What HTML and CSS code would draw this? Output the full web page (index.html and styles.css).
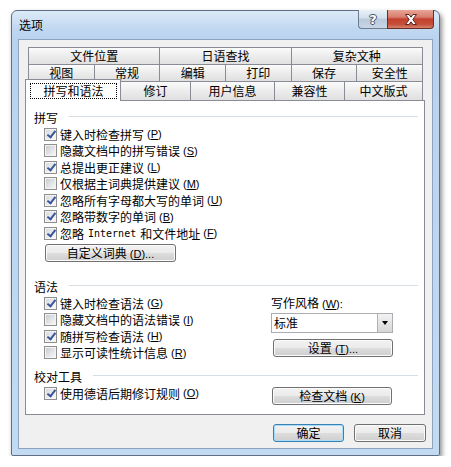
FILE: index.html
```html
<!DOCTYPE html>
<html lang="zh-CN">
  <head>
    <meta charset="UTF-8" />
    <title>选项</title>
    <link rel="stylesheet" href="styles.css">
  </head>
  <body>
    <div class="window">
      <div class="titlebar">
        <span class="title">选项</span>
        <div class="caption">
          <span class="cap-btn help">?</span>
          <span class="cap-btn close">
            <svg width="14" height="11" viewBox="0 0 14 11">
              <path d="M1.5 0.5 H5 L7 3.2 L9 0.5 H12.5 L8.8 5.5 L12.5 10.5 H9 L7 7.8 L5 10.5 H1.5 L5.2 5.5 Z" fill="#fff" stroke="#5b2620" stroke-width="1" stroke-linejoin="round" />
            </svg>
          </span>
        </div>
      </div>
      <div class="client">
        <div class="tabs">
          <div class="tab-row">
            <div class="tab">文件位置</div>
            <div class="tab">日语查找</div>
            <div class="tab">复杂文种</div>
          </div>
          <div class="tab-row">
            <div class="tab">视图</div>
            <div class="tab">常规</div>
            <div class="tab">编辑</div>
            <div class="tab">打印</div>
            <div class="tab">保存</div>
            <div class="tab">安全性</div>
          </div>
          <div class="tab-row front">
            <div class="tab active"><span class="focus">拼写和语法</span></div>
            <div class="tab w70">修订</div>
            <div class="tab w84">用户信息</div>
            <div class="tab w70">兼容性</div>
            <div class="tab grow">中文版式</div>
          </div>
        </div>

        <div class="panel">
          <div class="group-title">拼写</div>
          <div class="check on"><span class="box"></span>键入时检查拼写<span class="key">(<u>P</u>)</span></div>
          <div class="check"><span class="box"></span>隐藏文档中的拼写错误<span class="key">(<u>S</u>)</span></div>
          <div class="check on"><span class="box"></span>总提出更正建议<span class="key">(<u>L</u>)</span></div>
          <div class="check"><span class="box"></span>仅根据主词典提供建议<span class="key">(<u>M</u>)</span></div>
          <div class="check on"><span class="box"></span>忽略所有字母都大写的单词<span class="key">(<u>U</u>)</span></div>
          <div class="check on"><span class="box"></span>忽略带数字的单词<span class="key">(<u>B</u>)</span></div>
          <div class="check on"><span class="box"></span>忽略 <span class="mono">Internet</span> 和文件地址<span class="key">(<u>F</u>)</span></div>
          <button class="btn dict">自定义词典<span class="key">(<u>D</u>)...</span></button>

          <div class="group-title gap-lg">语法</div>
          <div class="grammar">
            <div class="col">
              <div class="check on"><span class="box"></span>键入时检查语法<span class="key">(<u>G</u>)</span></div>
              <div class="check"><span class="box"></span>隐藏文档中的语法错误<span class="key">(<u>I</u>)</span></div>
              <div class="check on"><span class="box"></span>随拼写检查语法<span class="key">(<u>H</u>)</span></div>
              <div class="check"><span class="box"></span>显示可读性统计信息<span class="key">(<u>R</u>)</span></div>
            </div>
            <div class="side">
              <div class="label">写作风格<span class="key">(<u>W</u>):</span></div>
              <div class="select">
                <span class="value">标准</span>
                <span class="drop"></span>
              </div>
              <button class="btn wide">设置<span class="key">(<u>T</u>)...</span></button>
            </div>
          </div>

          <div class="group-title gap-sm">校对工具</div>
          <div class="proof">
            <div class="check on"><span class="box"></span>使用德语后期修订规则<span class="key">(<u>O</u>)</span></div>
            <button class="btn wide doc">检查文档<span class="key">(<u>K</u>)</span></button>
          </div>
        </div>

        <div class="footer">
          <button class="btn default">确定</button>
          <button class="btn">取消</button>
        </div>
      </div>
    </div>
  </body>
</html>
```

FILE: styles.css
```css
* {
  box-sizing: border-box;
  margin: 0;
  padding: 0;
}
body {
  font-family: "Noto Sans CJK SC", "Noto Sans", sans-serif;
  font-size: 12px;
  color: #000;
  background: #fff;
  padding: 10px 0 0 11px;
}
.window {
  width: 429px;
  height: 446px;
  border: 1px solid #5e6f84;
  border-radius: 6px 6px 2px 2px;
  padding: 0 6px 6px;
  background: linear-gradient(180deg, #dceaf8 0, #c0d7f0 18px, #b9d2ee 28px, #c3daf3 100%);
  box-shadow: 2px 3px 5px rgba(0, 0, 0, 0.45);
}
.titlebar {
  height: 28px;
  display: flex;
  justify-content: space-between;
  align-items: flex-start;
}
.title {
  line-height: 28px;
  padding-left: 1px;
}
.caption {
  display: flex;
  margin-top: -1px;
  margin-right: -1px;
}
.cap-btn {
  height: 19px;
  display: flex;
  align-items: center;
  justify-content: center;
  border: 1px solid #6c7c91;
  border-top: none;
}
.help {
  width: 29px;
  border-radius: 0 0 0 4px;
  border-right: none;
  background: linear-gradient(180deg, #e9f0f8 0, #d3dfec 45%, #b9c9dc 50%, #c8d6e6 100%);
  color: #fff;
  font-family: "DejaVu Sans", sans-serif;
  font-weight: bold;
  font-size: 13px;
  text-shadow: 0 0 1px #3a4656, 1px 0 0 #4a5666, -1px 0 0 #4a5666, 0 1px 0 #4a5666, 0 -1px 0 #4a5666;
}
.close {
  width: 47px;
  border-color: #6b2d27;
  border-radius: 0 0 4px 0;
  background: linear-gradient(180deg, #e8a595 0, #d77c6d 40%, #c4402f 50%, #c4503a 80%, #d7836a 100%);
}
.client {
  height: 410px;
  background: #f0f0f0;
  border: 1px solid #8ea4bd;
  padding: 7px 6px 6px 6px;
}

/* tabs */
.tab-row {
  display: flex;
  height: 17px;
  margin: 0 3px;
}
.tab {
  flex: 1;
  border: 1px solid #898c95;
  border-bottom: none;
  margin-left: -1px;
  background: linear-gradient(180deg, #fbfbfb 0, #ececec 50%, #e0e0e0 100%);
  text-align: center;
  line-height: 15px;
  white-space: nowrap;
}
.tab:first-child {
  margin-left: 0;
}
.tab-row.front {
  height: 19px;
  margin-left: 0;
  align-items: flex-end;
}
.tab-row.front .tab {
  flex: none;
  height: 19px;
  line-height: 18px;
}
.tab.w70 {
  width: 71px;
}
.tab.w84 {
  width: 85px;
}
.tab-row.front .tab.grow {
  flex: 1;
}
.tab-row.front .tab.active {
  width: 96px;
  height: 22px;
  margin-bottom: -1px;
  background: #fff;
  position: relative;
  z-index: 1;
  padding: 3px 3px 0 4px;
  line-height: 14px;
}
.focus {
  display: block;
  border: 1px dotted #000;
  height: 16px;
  line-height: 14px;
}

/* panel */
.panel {
  height: 315px;
  margin-right: 1px;
  background: #fff;
  border: 1px solid #898c95;
  padding: 9px 6px 0 8px;
}
.group-title {
  display: flex;
  align-items: center;
  height: 16px;
  line-height: 16px;
}
.group-title::after {
  content: "";
  flex: 1;
  height: 1px;
  margin: -3px 0 0 11px;
  background: #d5dfe5;
}
.gap-lg {
  margin-top: 17px;
}
.gap-sm {
  margin-top: 8px;
}
.check {
  display: flex;
  align-items: center;
  height: 16.5px;
  padding-left: 10px;
  white-space: nowrap;
}
.box {
  width: 13px;
  height: 13px;
  margin-right: 3px;
  border: 1px solid #8e8f8f;
  background: #f4f4f4;
  position: relative;
  flex: none;
}
.box::before {
  content: "";
  position: absolute;
  left: 1px;
  top: 1px;
  width: 9px;
  height: 9px;
  background: linear-gradient(135deg, #c8ccd2 0, #e4e6e9 60%, #f6f6f6 100%);
}
.check.on .box::before {
  background: linear-gradient(135deg, #d7dbe0 0, #eef0f2 70%, #fafafa 100%);
}
.check.on .box::after {
  content: "";
  position: absolute;
  left: 4px;
  top: 0px;
  width: 3px;
  height: 7px;
  border: solid #3b5498;
  border-width: 0 2px 2px 0;
  transform: rotate(38deg);
}
.key {
  margin-left: 3px;
  font-family: "Liberation Sans", sans-serif;
  font-size: 11px;
}
.mono {
  font-family: "DejaVu Sans Mono", monospace;
  font-size: 10px;
  margin: 0 4px;
}

/* buttons */
.btn {
  font-family: inherit;
  font-size: 12px;
  height: 18px;
  line-height: 14px;
  border: 1px solid #707070;
  border-radius: 3px;
  background: linear-gradient(180deg, #f2f2f2 0, #ebebeb 50%, #dddddd 51%, #cfcfcf 100%);
  box-shadow: inset 0 0 0 1px #fbfbfb;
  color: #000;
  text-align: center;
}
.dict {
  display: block;
  width: 131px;
  margin: 2.5px 0 0 11px;
}
.grammar {
  display: flex;
}
.grammar .col {
  flex: 1;
}
.side {
  width: 122px;
  margin-right: 25px;
}
.label {
  height: 16px;
  line-height: 16px;
}
.select {
  margin-top: 2px;
  height: 20px;
  border: 1px solid #abadb3;
  background: #fff;
  display: flex;
  align-items: stretch;
  padding: 0 0 0 2px;
}
.value {
  flex: 1;
  line-height: 18px;
}
.drop {
  width: 15px;
  border-left: 1px solid #aeb1b7;
  background: linear-gradient(180deg, #f3f3f3 0, #e4e4e4 50%, #d6d6d6 100%);
  display: flex;
  align-items: center;
  justify-content: center;
}
.drop::after {
  content: "";
  border-left: 3.5px solid transparent;
  border-right: 3.5px solid transparent;
  border-top: 4px solid #000;
}
.btn.wide {
  display: block;
  width: 120px;
  margin: 6px 0 0 2px;
}
.proof {
  display: flex;
  align-items: flex-start;
}
.proof .check {
  flex: 1;
}
.btn.doc {
  margin: 2px 26px 0 0;
}
.footer {
  display: flex;
  justify-content: flex-end;
  gap: 10px;
  margin-top: 9px;
}
.footer .btn {
  width: 72px;
}
.btn.default {
  width: 71px;
  border-color: #3c7fb1;
  box-shadow: inset 0 0 0 1px #a4defa;
}
```
